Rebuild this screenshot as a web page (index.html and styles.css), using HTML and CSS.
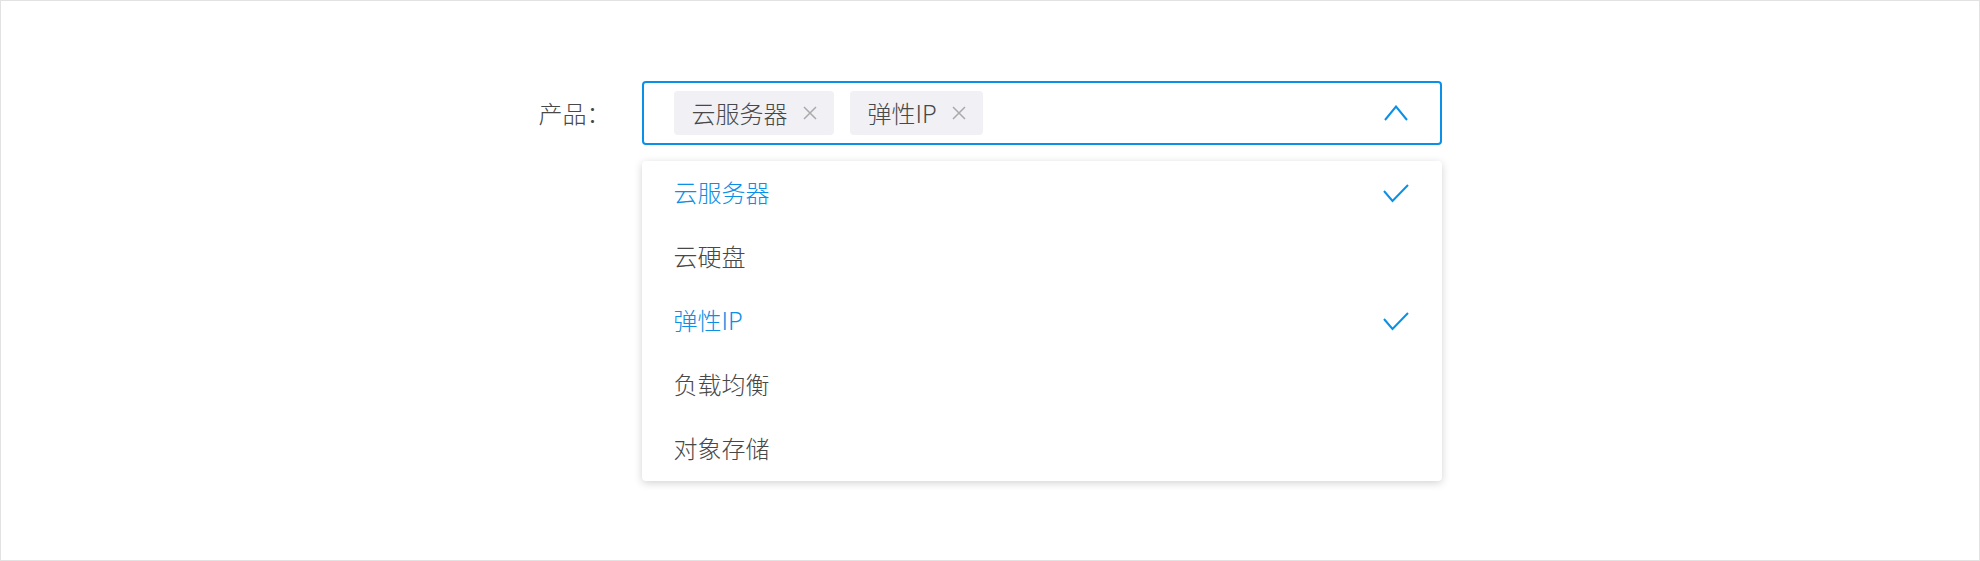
FILE: index.html
```html
<!DOCTYPE html>
<html lang="zh-CN">
<head>
<meta charset="utf-8">
<title>产品选择</title>
<link rel="stylesheet" href="styles.css">
</head>
<body>
<div class="page">
  <div class="field">
    <label class="field-label">产品：</label>
    <div class="select-wrap">
      <div class="select">
        <div class="tags">
          <span class="tag">云服务器<svg class="tag-close" width="14" height="14" viewBox="0 0 14 14"><path d="M1 1L13 13M13 1L1 13"/></svg></span>
          <span class="tag">弹性IP<svg class="tag-close" width="14" height="14" viewBox="0 0 14 14"><path d="M1 1L13 13M13 1L1 13"/></svg></span>
        </div>
        <svg class="arrow" width="26" height="16" viewBox="0 0 26 16"><path d="M2 15L13 1.5L24 15"/></svg>
      </div>
      <ul class="menu">
        <li class="menu-item selected">云服务器<svg class="check" width="26" height="20" viewBox="0 0 26 20"><path d="M1 8L9.5 18L25 2"/></svg></li>
        <li class="menu-item">云硬盘</li>
        <li class="menu-item selected">弹性IP<svg class="check" width="26" height="20" viewBox="0 0 26 20"><path d="M1 8L9.5 18L25 2"/></svg></li>
        <li class="menu-item">负载均衡</li>
        <li class="menu-item">对象存储</li>
      </ul>
    </div>
  </div>
</div>
</body>
</html>
```
FILE: styles.css
```css
html, body {
  margin: 0;
  padding: 0;
  background: #fff;
}
body {
  font-family: "Noto Sans CJK SC", "Noto Sans", sans-serif;
  font-weight: 300;
  color: #484848;
}
.page {
  box-sizing: border-box;
  height: 561px;
  border: 1px solid #e2e2e2;
  display: flex;
  justify-content: center;
  align-items: flex-start;
  padding-top: 80px;
}
.field {
  display: flex;
  align-items: center;
}
.field-label {
  font-size: 24px;
  line-height: 32px;
  color: #484848;
  margin-right: 31px;
}
.select-wrap {
  position: relative;
  width: 800px;
}
.select {
  box-sizing: border-box;
  height: 64px;
  border: 2px solid #0a90e6;
  border-radius: 4px;
  display: flex;
  align-items: center;
  padding: 0 31px 0 30px;
}
.tags {
  display: flex;
  gap: 16px;
}
.tag {
  height: 44px;
  box-sizing: border-box;
  padding: 0 17px 0 18px;
  background: #f0f0f5;
  border-radius: 4px;
  display: flex;
  align-items: center;
  gap: 15px;
  font-size: 24px;
  line-height: 32px;
  color: #484848;
}
.tag-close path {
  stroke: #aaa;
  stroke-width: 1.5;
  fill: none;
}
.arrow {
  margin-left: auto;
}
.arrow path, .check path {
  stroke: #0a90e6;
  stroke-width: 2;
  fill: none;
}
.menu {
  position: absolute;
  top: calc(100% + 16px);
  left: 0;
  width: 100%;
  margin: 0;
  padding: 0;
  list-style: none;
  background: #fff;
  border-radius: 4px;
  box-shadow: 0 2px 8px rgba(0, 0, 0, 0.18);
}
.menu-item {
  height: 64px;
  box-sizing: border-box;
  padding: 0 33px 2px 32px;
  display: flex;
  align-items: center;
  justify-content: space-between;
  font-size: 24px;
  line-height: 32px;
  color: #484848;
}
.menu-item .check {
  margin-top: 2px;
}
.menu-item.selected {
  color: #0a90e6;
}
```
